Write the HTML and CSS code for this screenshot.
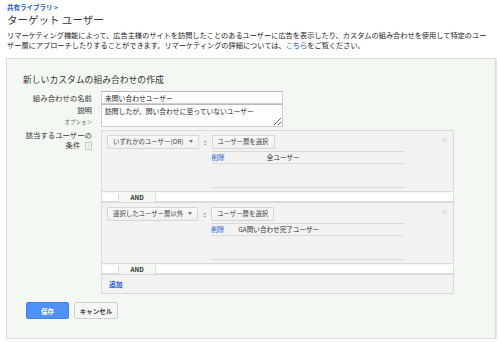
FILE: index.html
```html
<!DOCTYPE html>
<html lang="ja">
<head>
    <meta charset="UTF-8">
    <meta name="viewport" content="width=device-width, initial-scale=1.0">
    <title>ターゲット ユーザー</title>
    <link rel="stylesheet" href="styles.css">
</head>
<body>
    <!-- En-tete -->
    <div class="header">
        <a href="#" class="crumb">共有ライブラリ &gt;</a>
        <h1 class="title">ターゲット ユーザー</h1>
        <p class="intro">リマーケティング機能によって、広告主様のサイトを訪問したことのあるユーザーに広告を表示したり、カスタムの組み合わせを使用して特定のユーザー層にアプローチしたりすることができます。リマーケティングの詳細については、<a href="#">こちら</a>をご覧ください。</p>
    </div>

    <div class="panel">
        <h2 class="panel-title">新しいカスタムの組み合わせの作成</h2>

        <form class="form">
            <div class="form-row">
                <label class="form-label label-mid" for="combo_name">組み合わせの名前</label>
                <input type="text" id="combo_name" class="field" value="未問い合わせユーザー">
            </div>
            <div class="form-row">
                <label class="form-label label-desc" for="combo_desc">説明<span class="optional">オプション</span></label>
                <textarea id="combo_desc" class="field area">訪問したが、問い合わせに至っていないユーザー</textarea>
            </div>
            <div class="form-row row-cond">
                <div class="form-label label-cond">該当するユーザーの<br>条件 <span class="help">?</span></div>
                <div class="conditions">
                    <div class="cond-box">
                        <button type="button" class="pick">いずれかのユーザー(OR)<span class="caret"></span></button>
                        <span class="colon">:</span>
                        <div class="cond-list">
                            <button type="button" class="pick">ユーザー層を選択</button>
                            <div class="list-box">
                                <table class="list">
                                    <tr><td><a href="#">削除</a></td><td>全ユーザー</td></tr>
                                </table>
                            </div>
                        </div>
                        <span class="close">×</span>
                    </div>

                    <div class="and-row"><span class="and-left"></span><span class="and-text">AND</span><span class="and-right"></span></div>

                    <div class="cond-box">
                        <button type="button" class="pick">選択したユーザー層以外<span class="caret"></span></button>
                        <span class="colon">:</span>
                        <div class="cond-list">
                            <button type="button" class="pick">ユーザー層を選択</button>
                            <div class="list-box">
                                <table class="list">
                                    <tr><td><a href="#">削除</a></td><td>GA問い合わせ完了ユーザー</td></tr>
                                </table>
                            </div>
                        </div>
                        <span class="close">×</span>
                    </div>

                    <div class="and-row"><span class="and-left"></span><span class="and-text">AND</span><span class="and-right"></span></div>

                    <div class="add-box"><a href="#">追加</a></div>
                </div>
            </div>

            <div class="actions">
                <button type="submit" class="btn btn-save">保存</button>
                <button type="button" class="btn btn-cancel">キャンセル</button>
            </div>
        </form>
    </div>
</body>
</html>
```

FILE: styles.css
```css
body {
    margin: 0;
    background: #fff;
    color: #333;
    font-family: "Noto Sans CJK JP", "Noto Sans", sans-serif;
}

a {
    color: #1a5bd6;
    text-decoration: none;
}

.header {
    padding: 3px 7px 0;
}

.crumb {
    display: block;
    font-size: 6.5px;
    line-height: 9px;
    font-weight: bold;
}

.title {
    margin: 1px 0 0;
    font-size: 10.5px;
    line-height: 14px;
    font-weight: normal;
    color: #333;
}

.intro {
    margin: 3px 0 0;
    font-size: 7.2px;
    line-height: 10px;
    color: #222;
}

.panel {
    margin: 8px 4px 0 6px;
    padding: 15px 16px 19px;
    background: #f4f8f2;
    border: 1px solid #dcdfd9;
    box-shadow: 1px 1px 0 #e6e6e6;
}

.panel-title {
    margin: 0 0 5px;
    font-size: 8.8px;
    line-height: 12px;
    font-weight: normal;
    color: #333;
}

.form-row {
    display: flex;
    gap: 9px;
}

.form-label {
    width: 69px;
    flex: none;
    text-align: right;
    font-size: 7.4px;
    color: #333;
}

.label-mid {
    line-height: 13px;
}

.label-desc {
    padding-top: 1px;
    line-height: 10px;
}

.optional {
    display: block;
    margin-top: 3px;
    font-size: 5.5px;
    line-height: 8px;
    color: #666;
}

.label-cond {
    line-height: 9.5px;
}

.help {
    display: inline-block;
    width: 5px;
    height: 6px;
    margin-left: 3px;
    border: 1px solid #c8c8c8;
    font-size: 4.5px;
    line-height: 6px;
    text-align: center;
    color: #999;
    vertical-align: 0;
}

.field {
    display: block;
    box-sizing: border-box;
    width: 182px;
    height: 13px;
    margin: 0;
    padding: 0 3px;
    border: 1px solid #cfcfcf;
    border-top-color: #b9b9b9;
    background: #fff;
    font-family: inherit;
    font-size: 6.8px;
    color: #222;
}

.area {
    height: 23px;
    padding: 1px 3px;
    line-height: 10px;
    resize: vertical;
}

.row-cond {
    margin-top: 3px;
}

.conditions {
    width: 353px;
}

.cond-box {
    display: flex;
    align-items: flex-start;
    padding: 4px 5px 3px;
    background: #f2f2f2;
    border: 1px solid #dadada;
}

.pick {
    display: block;
    height: 14px;
    padding: 0 5px;
    border: 1px solid #d6d6d6;
    border-radius: 1px;
    background: linear-gradient(#f8f8f8, #f0f0f0);
    font-family: inherit;
    font-size: 6.4px;
    line-height: 12px;
    color: #444;
    white-space: nowrap;
}

.caret {
    display: inline-block;
    margin-left: 5px;
    border-top: 3px solid #777;
    border-left: 2px solid transparent;
    border-right: 2px solid transparent;
    vertical-align: 1px;
}

.colon {
    width: 13px;
    text-align: center;
    font-size: 7px;
    line-height: 14px;
    font-weight: bold;
    color: #555;
}

.cond-list {
    width: 193px;
}

.list-box {
    box-sizing: border-box;
    height: 37px;
    margin-top: 2px;
    border-top: 1px solid #d9d9d9;
    border-bottom: 1px solid #d9d9d9;
}

.list {
    width: 100%;
    border-collapse: collapse;
    font-size: 6.6px;
    color: #333;
}

.list td {
    height: 11px;
    padding: 0;
    line-height: 11px;
    border-bottom: 1px solid #dcdcdc;
}

.close {
    margin-left: auto;
    font-size: 7px;
    line-height: 8px;
    color: #c0c0c0;
}

.and-row {
    display: flex;
    align-items: center;
    height: 10px;
}

.and-left,
.and-right {
    box-sizing: border-box;
    height: 9px;
    background: #fff;
    border: 1px solid #dadada;
    border-top: none;
}

.and-left {
    width: 18px;
}

.and-right {
    flex: 1;
}

.and-text {
    width: 36px;
    text-align: center;
    font-size: 6.3px;
    font-weight: bold;
    color: #333;
}

.add-box {
    height: 18px;
    padding-left: 7px;
    background: #f2f2f2;
    border: 1px solid #dadada;
    font-size: 6.8px;
    line-height: 18px;
    font-weight: bold;
}

.actions {
    display: flex;
    gap: 5px;
    margin-top: 8px;
    padding-left: 3px;
}

.btn {
    height: 17px;
    padding: 0;
    border-radius: 2px;
    font-family: inherit;
    font-size: 6.5px;
    font-weight: bold;
}

.btn-save {
    width: 43px;
    border: 1px solid #3f83f1;
    background: #4d90fe;
    color: #fff;
}

.btn-cancel {
    width: 44px;
    border: 1px solid #d0d0d0;
    background: #f5f5f5;
    color: #444;
}
```
